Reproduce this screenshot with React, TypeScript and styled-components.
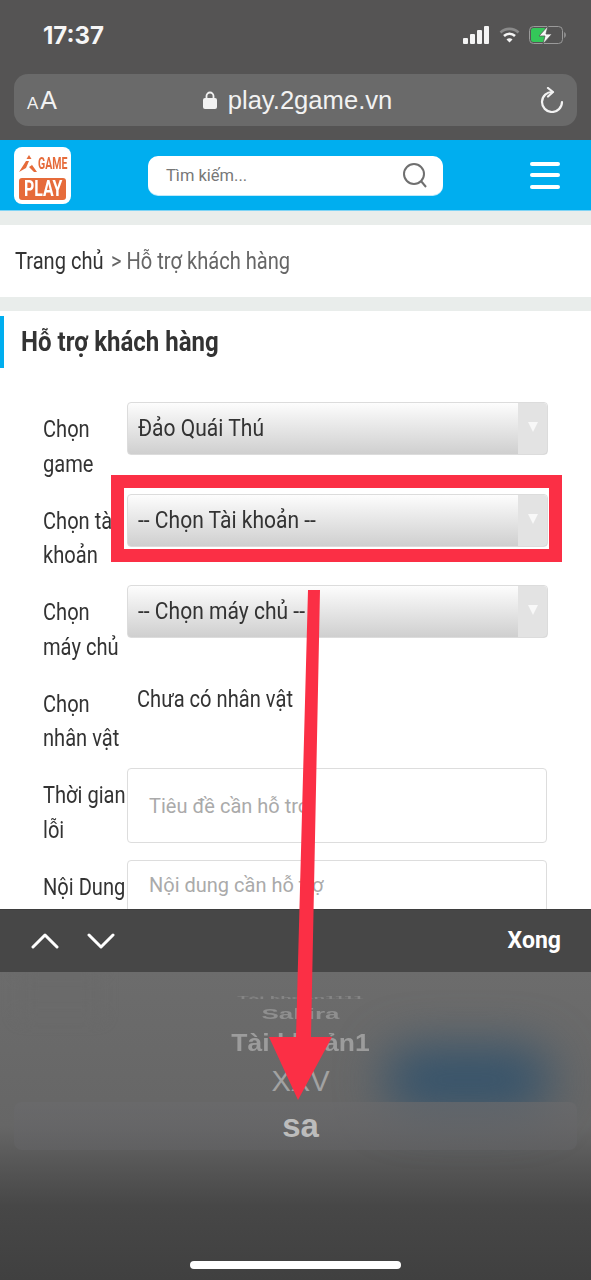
import React from "react";
import styled, { createGlobalStyle } from "styled-components";

const Global = createGlobalStyle`
  html, body { margin: 0; padding: 0; background: #fff; }
  * { box-sizing: border-box; }
`;
const roboto = `"Roboto", "Liberation Sans", sans-serif`;
const sans = `"Liberation Sans", Arial, sans-serif`;

const Screen = styled.div`
  position: relative; width: 591px; height: 1280px; overflow: hidden;
  display: flex; flex-direction: column; background: #fff; font-family: ${roboto};
`;
/* The page's condensed web font is not installed: Roboto is narrowed instead. */
const Narrow = styled.span<{ $x: number }>`
  display: inline-block; transform: scaleX(${p => p.$x}); transform-origin: 0 50%; white-space: nowrap;
`;
const Chrome = styled.div`
  height: 140px; background: #555454; padding: 0 14px 14px; display: flex; flex-direction: column; flex: none;
`;
const StatusBar = styled.div`
  height: 74px; display: flex; align-items: flex-start; justify-content: space-between; padding: 23px 11px 0 29px; color: #f6f6f6;
`;
const Clock = styled.span`font: 700 24px/26px "Inter", ${sans};`;
const StatusIcons = styled.div`display: flex; align-items: center; gap: 9px; margin-top: 3px;`;
const AddressBar = styled.div`
  height: 52px; border-radius: 14px; background: #6a6a6a; display: flex; align-items: center; padding: 0 13px;
  color: #f2f2f2; font-family: ${sans};
`;
const TextSize = styled.div`width: 44px; font-size: 17px; flex: none; line-height: 1; letter-spacing: 2px; margin-top: 1px;`;
const BigA = styled.span`font-size: 25px; letter-spacing: 0;`;
const Url = styled.div`flex: 1; display: flex; align-items: center; justify-content: center; gap: 11px; font-size: 25.6px; margin-left: -16px;`;

const Header = styled.header`
  height: 71px; flex: none; background: #00aeef; display: flex; align-items: center; padding: 0 31px 0 14px; border-bottom: 1px solid #7fd4f5;
`;
const Logo = styled.div`
  width: 57px; height: 57px; border-radius: 8px; background: #fff; padding: 6px 5px 4px; flex: none;
  display: flex; flex-direction: column; justify-content: space-between;
`;
const LogoTop = styled.div`display: flex; align-items: flex-end; height: 19px; color: #e66b3a; font: 700 17px/18px ${roboto};`;
const LogoMark = styled.svg`flex: none;`;
const LogoPlay = styled.div`
  height: 22px; background: #e66b3a; border-radius: 3px; color: #fff; font: 700 22px/22px ${roboto}; padding-left: 5px;
`;
const Search = styled.div`
  width: 295px; height: 39px; margin-left: 77px; border-radius: 10px; background: #fff; display: flex; align-items: center;
  justify-content: space-between; padding: 0 16px 0 18px; color: #777; font: 400 16.5px ${roboto}; box-shadow: 0 1px 0 #bfe9fa;
`;
const Burger = styled.div`margin-left: auto; width: 30px; display: flex; flex-direction: column; gap: 7.5px;`;
const BurgerBar = styled.span`display: block; height: 4px; border-radius: 2px; background: #fff;`;
const Strip = styled.div`height: 14px; flex: none; background: #e9edeb;`;
const Crumbs = styled.nav`
  height: 72px; flex: none; display: flex; align-items: center; padding-left: 15px; font-size: 23.5px; color: #333;
`;
const CrumbMuted = styled.span`color: #666; margin-left: -3px;`;
const Content = styled.main`flex: 1; min-height: 0; overflow: hidden; padding-top: 5px;`;
const Title = styled.h1`
  margin: 0; height: 52px; border-left: 4px solid #00aeef; padding-left: 17px; display: flex; align-items: center;
  font: 700 27px ${roboto}; color: #333;
`;
const Form = styled.div`padding: 34px 43px 0;`;
const Row = styled.div`height: 91.5px; display: flex; align-items: flex-start;`;
const Label = styled.label`
  width: 99px; margin-right: -15px; flex: none; padding-top: 10px; font-size: 23.5px; line-height: 34.5px; color: #333;
  transform: scaleX(.855); transform-origin: 0 0;
`;
const Select = styled.div`
  position: relative; width: 421px; height: 53px; border: 1px solid #dcdcdc; border-radius: 4px; padding-left: 10px; display: flex; align-items: center;
  background: linear-gradient(#fdfdfd, #f1f1f1 25%, #cfcfcf); font-size: 23px; color: #333;
`;
const SelectArrow = styled.span`
  position: absolute; right: 0; top: 0; bottom: 0; width: 29px; background: #e3e3e3; border-radius: 0 4px 4px 0; display: flex; justify-content: center; padding-top: 19px;
  &::after { content: ""; width: 0; height: 0; border: 5px solid transparent; border-top: 10px solid #f8f8f8; }
`;
const StaticValue = styled.div`font-size: 23px; color: #333; padding: 10px 0 0 10px; line-height: 26px;`;
const TextInput = styled.div<{ $top: number }>`
  position: relative; width: 420px; height: 75px; border: 1px solid #ddd; border-radius: 4px; padding: ${p => p.$top}px 0 0 21px; background: #fff;
  font: 400 20px/26px ${roboto}; color: #aaa; white-space: nowrap;
`;
const Keyboard = styled.div`position: relative; flex: none; height: 371px; overflow: hidden; background: #444;`;
const Toolbar = styled.div`
  height: 63px; background: #474747; display: flex; align-items: center; padding: 0 30px 0 31px; gap: 28px; color: #fff; border-top: 1px solid #3e3e3e;
`;
const Done = styled.span`margin-left: auto; font: 700 23px ${roboto}; margin-top: -2px;`;
const Picker = styled.div`
  position: relative; height: 308px; padding: 21px 0 0 10px; overflow: hidden;
  background: linear-gradient(#6c6c6c 0, #666 50%, #575757 62%, #474747 76%, #404040 100%);
  display: flex; flex-direction: column; align-items: center; font-family: ${sans};
`;
const Glow = styled.div`
  position: absolute; left: 385px; top: 75px; width: 165px; height: 66px; background: #35536b; filter: blur(24px); border-radius: 30px;
`;
const Smudge = styled.div`
  position: absolute; left: 20px; top: 0; width: 80px; height: 45px; background: #6a6a6a; filter: blur(8px);
`;
const Band = styled.div`
  position: absolute; left: 14px; right: 14px; top: 130px; height: 48px; border-radius: 8px;
  background: linear-gradient(rgba(106,106,108,.7), rgba(98,98,100,.7));
`;
const Item = styled.div<{ $h: number; $size: number; $sy: number; $color: string; $w?: number }>`
  position: relative; height: ${p => p.$h}px; line-height: ${p => p.$h}px; font-size: ${p => p.$size}px; color: ${p => p.$color};
  font-weight: ${p => p.$w ?? 400}; transform: scaleY(${p => p.$sy}); white-space: nowrap;
`;
const HomeBar = styled.div`
  position: absolute; left: 190px; bottom: 11px; width: 211px; height: 8px; border-radius: 4px; background: #fff;
`;
const RedBox = styled.div`
  position: absolute; left: 111px; top: 475px; width: 451px; height: 87px; border: 13px solid #fb2f45;
`;
const ArrowSvg = styled.svg`position: absolute; left: 0; top: 0; pointer-events: none;`;

const rows = [
  ["Chọn game", "Đảo Quái Thú"],
  ["Chọn tài khoản", "-- Chọn Tài khoản --"],
  ["Chọn máy chủ", "-- Chọn máy chủ --"],
];

export default function App() {
  return (
    <Screen>
      <Global />
      <Chrome>
        <StatusBar>
          <Clock>17:37</Clock>
          <StatusIcons>
            <svg width="27" height="18" viewBox="0 0 27 18" fill="#f4f4f4">
              <rect x="0" y="12" width="5" height="6" rx="1" /><rect x="7" y="8" width="5" height="10" rx="1" />
              <rect x="14" y="4" width="5" height="14" rx="1" /><rect x="21" y="0" width="5" height="18" rx="1" />
            </svg>
            <svg width="21" height="16" viewBox="0 0 21 16" fill="none">
              <path d="M1.5 5.5a13 13 0 0 1 18 0" stroke="#8a8a8a" strokeWidth="2.6" />
              <path d="M5 9a8 8 0 0 1 11 0" stroke="#f4f4f4" strokeWidth="2.6" />
              <path d="M10.5 15.5l-3-3a4.2 4.2 0 0 1 6 0z" fill="#f4f4f4" />
            </svg>
            <svg width="37" height="18" viewBox="0 0 37 18">
              <rect x=".5" y=".5" width="33" height="17" rx="4" fill="none" stroke="#9a9a9a" />
              <path d="M35 6v6c1.2-.4 2-1.600 2-3s-.8-2.600-2-3z" fill="#8a8a8a" />
              <rect x="2" y="2" width="15" height="14" rx="2.500" fill="#34c759" />
              <path d="M19 0l-9 10h6l-2 8 9-10h-6z" fill="#f7f7f7" stroke="#555" strokeWidth=".8" />
            </svg>
          </StatusIcons>
        </StatusBar>
        <AddressBar>
          <TextSize>A<BigA>A</BigA></TextSize>
          <Url>
            <svg width="14" height="18" viewBox="0 0 14 18">
              <path d="M3.500 8V5a3.500 3.500 0 0 1 7 0v3" fill="none" stroke="#f2f2f2" strokeWidth="1.800" />
              <rect x="0" y="7" width="14" height="11" rx="2" fill="#f2f2f2" />
            </svg>
            play.2game.vn
          </Url>
          <svg width="24" height="26" viewBox="0 0 24 26" fill="none" stroke="#f2f2f2" strokeWidth="2.200" strokeLinecap="round" strokeLinejoin="round">
            <path d="M12.500 5A10 10 0 1 0 22 15" />
            <path d="M8 1l5 4-5 4.500" />
          </svg>
        </AddressBar>
      </Chrome>
      <Header>
        <Logo>
          <LogoTop>
            <LogoMark width="19" height="17" viewBox="0 0 19 17" fill="#e66b3a">
              <path d="M10 0l2.500 4h-5zM7 6l-7 11 7-4 3-7zM11 7l2 3-3 2 5 5h3z" />
            </LogoMark>
            <Narrow $x={0.62}>GAME</Narrow>
          </LogoTop>
          <LogoPlay><Narrow $x={0.72}>PLAY</Narrow></LogoPlay>
        </Logo>
        <Search>
          Tìm kiếm...
          <svg width="24" height="25" viewBox="0 0 24 25" fill="none" stroke="#6f6f6f" strokeWidth="2">
            <circle cx="11" cy="11" r="10" /><path d="M18 18l5 6" />
          </svg>
        </Search>
        <Burger><BurgerBar /><BurgerBar /><BurgerBar /></Burger>
      </Header>
      <Strip />
      <Crumbs><Narrow $x={0.855}>Trang chủ <CrumbMuted>&nbsp;&gt;&nbsp;Hỗ trợ khách hàng</CrumbMuted></Narrow></Crumbs>
      <Strip />
      <Content>
        <Title><Narrow $x={0.89}>Hỗ trợ khách hàng</Narrow></Title>
        <Form>
          {rows.map(([l, v]) => (
            <Row key={l}><Label>{l}</Label><Select><Narrow $x={0.915}>{v}</Narrow><SelectArrow /></Select></Row>
          ))}
          <Row><Label>Chọn nhân vật</Label><StaticValue><Narrow $x={0.875}>Chưa có nhân vật</Narrow></StaticValue></Row>
          <Row><Label>Thời gian lỗi</Label><TextInput $top={24}>Tiêu đề cần hỗ trợ</TextInput></Row>
          <Row><Label>Nội Dung</Label><TextInput $top={11}>Nội dung cần hỗ trợ</TextInput></Row>
        </Form>
      </Content>
      <Keyboard>
        <Toolbar>
          <svg width="28" height="16" viewBox="0 0 28 16" fill="none" stroke="#fff" strokeWidth="3" strokeLinecap="round" strokeLinejoin="round"><path d="M2 14L14 2l12 12" /></svg>
          <svg width="28" height="16" viewBox="0 0 28 16" fill="none" stroke="#fff" strokeWidth="3" strokeLinecap="round" strokeLinejoin="round"><path d="M2 2l12 12L26 2" /></svg>
          <Done>Xong</Done>
        </Toolbar>
        <Picker>
          <Smudge />
          <Glow />
          <Band />
          <Item $h={10} $size={18.8} $sy={0.2} $color="#858585" $w={700}>Tài khoản1111</Item>
          <Item $h={22} $size={26} $sy={0.55} $color="#8f8f8f" $w={700}>Sakira</Item>
          <Item $h={36} $size={26.5} $sy={0.92} $color="#9c9c9c" $w={700}>Tài khoản1</Item>
          <Item $h={41} $size={29} $sy={1} $color="#a2a2a2">XXV</Item>
          <Item $h={48} $size={33} $sy={1} $color="#bcbcbc" $w={700}>sa</Item>
        </Picker>
        <HomeBar />
      </Keyboard>
      <RedBox />
      <ArrowSvg width="591" height="1280" viewBox="0 0 591 1280">
        <path d="M308 590h12l-9 447h21l-34 63-29-63h27z" fill="#fb2f45" />
      </ArrowSvg>
    </Screen>
  );
}
